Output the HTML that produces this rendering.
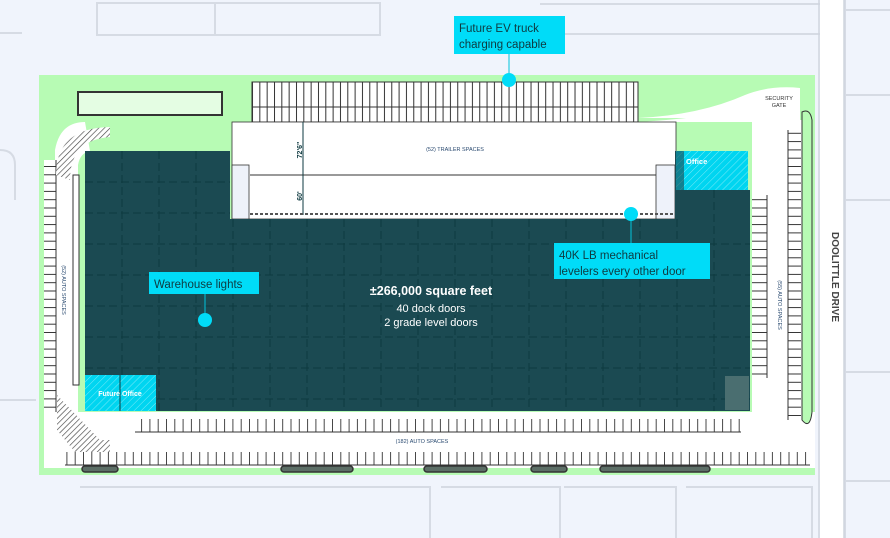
<!DOCTYPE html>
<html><head><meta charset="utf-8"><style>
html,body{margin:0;padding:0;background:#f0f4fc;}
svg{display:block}
text{font-family:"Liberation Sans",sans-serif}
</style></head><body>
<svg width="890" height="538" viewBox="0 0 890 538" xmlns="http://www.w3.org/2000/svg">
<defs>
<pattern id="trl" x="252" y="0" width="7.33" height="10" patternUnits="userSpaceOnUse"><rect width="7.33" height="10" fill="#fff"/><line x1="0.5" y1="0" x2="0.5" y2="10" stroke="#333" stroke-width="1"/></pattern>
<pattern id="stallH" x="0" y="0" width="8.3" height="20" patternUnits="userSpaceOnUse"><line x1="0.5" y1="0" x2="0.5" y2="20" stroke="#333" stroke-width="0.9"/></pattern>
<pattern id="stallV" x="0" y="0" width="20" height="8.3" patternUnits="userSpaceOnUse"><line x1="0" y1="0.5" x2="20" y2="0.5" stroke="#333" stroke-width="0.9"/></pattern>
<pattern id="gridV" x="85" y="0" width="36.8" height="10" patternUnits="userSpaceOnUse"><line x1="0.5" y1="0" x2="0.5" y2="6" stroke="#0e3a40" stroke-width="1"/></pattern>
<pattern id="hatch" width="5" height="5" patternUnits="userSpaceOnUse" patternTransform="rotate(45)"><rect width="5" height="5" fill="#00d5f0"/><line x1="0" y1="0" x2="0" y2="5" stroke="#7be9f8" stroke-width="1"/></pattern>
<pattern id="ghatch" width="4" height="4" patternUnits="userSpaceOnUse" patternTransform="rotate(45)"><rect width="4" height="4" fill="#fff"/><line x1="0" y1="0" x2="0" y2="4" stroke="#444" stroke-width="1.3"/></pattern>
</defs>

<!-- surrounding light outlines -->
<g fill="none" stroke="#d6dbe4" stroke-width="2">
<path d="M0,33 H22"/><path d="M0,150 Q15,150 15,165 V200"/>
<path d="M0,400 H36"/><path d="M80,487 H430 V538"/><path d="M441,487 H560 V538"/><path d="M564,487 H676 V538"/><path d="M686,487 H812 V538"/>
<path d="M97,3 H380 V35 H97 Z"/><path d="M215,3 V35"/><path d="M540,4 H826"/><path d="M540,34 H826"/>
<path d="M845,0 V538"/><path d="M822,0 V538"/><path d="M845,95 H890"/><path d="M845,200 H890"/><path d="M845,372 H890"/><path d="M845,481 H890"/><path d="M845,10 H890"/>
</g>

<!-- site green -->
<rect x="39" y="75" width="776" height="400" fill="#b7fbb4"/>
<!-- road strip Doolittle -->
<rect x="820" y="0" width="24" height="538" fill="#fff"/>
<line x1="819" y1="0" x2="819" y2="538" stroke="#cfd5de" stroke-width="1.5"/>
<line x1="844" y1="0" x2="844" y2="538" stroke="#cfd5de" stroke-width="1.5"/>

<!-- paved areas -->
<path d="M85,122 H640 Q700,118 740,110 Q760,110 765,130 V195 H760 V122 Z" fill="#fff"/>
<path d="M638,118 Q700,115 745,95 Q770,85 800,88 V125 H770 Q760,118 745,118 Z" fill="#fff"/>
<path d="M252,82 H638 V122 H252 Z" fill="url(#trl)" stroke="#333" stroke-width="1"/>
<line x1="252" y1="107" x2="638" y2="107" stroke="#333"/>
<path d="M85,122 Q60,122 55,150 V160 H44 V455 H78 V165 Q80,153 90,151 Z" fill="#fff"/>
<rect x="44" y="160" width="12" height="290" fill="url(#stallV)"/>
<line x1="56" y1="160" x2="56" y2="455" stroke="#333"/>
<rect x="73" y="175" width="6" height="210" fill="#fff" stroke="#333" stroke-width="1"/>
<path d="M56,175 Q56,128 110,127 V137 Q70,140 70,180 Z" fill="url(#ghatch)"/>
<rect x="44" y="412" width="771" height="56" fill="#fff"/>
<rect x="135" y="419" width="606" height="13" fill="url(#stallH)"/>
<line x1="135" y1="432" x2="741" y2="432" stroke="#333"/>
<rect x="65" y="452" width="745" height="13" fill="url(#stallH)"/>
<line x1="65" y1="465" x2="810" y2="465" stroke="#333"/>
<path d="M57,395 L100,440 H110 L110,452 L75,452 L57,430 Z" fill="url(#ghatch)"/>
<rect x="752" y="120" width="50" height="300" fill="#fff"/>
<rect x="752" y="195" width="15" height="180" fill="url(#stallV)"/>
<rect x="788" y="130" width="13" height="290" fill="url(#stallV)"/>
<line x1="767" y1="195" x2="767" y2="378" stroke="#333"/>
<line x1="788" y1="130" x2="788" y2="420" stroke="#333"/>
<path d="M802,125 V420 Q810,430 812,412 V120 Q810,108 802,112 Z" fill="#b7fbb4" stroke="#333"/>

<!-- top left planter box -->
<rect x="78" y="92" width="144" height="23" fill="#e4fde3" stroke="#333" stroke-width="2"/>
<!-- dock apron -->
<rect x="232" y="122" width="444" height="97" fill="#fff" stroke="#333" stroke-width="0.8"/>
<line x1="250" y1="175" x2="660" y2="175" stroke="#333"/>
<rect x="232" y="165" width="17" height="54" fill="#eef2fa" stroke="#333" stroke-width="0.8"/>
<rect x="656" y="165" width="19" height="54" fill="#eef2fa" stroke="#333" stroke-width="0.8"/>
<line x1="303" y1="122" x2="303" y2="215" stroke="#0e3a40" stroke-width="1"/>
<text x="302" y="150" font-size="7" font-weight="bold" fill="#0e3a40" transform="rotate(-90 302 150)" text-anchor="middle">72'6"</text>
<text x="302" y="196" font-size="7" font-weight="bold" fill="#0e3a40" transform="rotate(-90 302 196)" text-anchor="middle">60'</text>
<text x="455" y="151" font-size="5.5" fill="#2a4a70" text-anchor="middle">(52) TRAILER SPACES</text>
<text x="779" y="100" font-size="5.5" fill="#333" text-anchor="middle">SECURITY</text>
<text x="779" y="107" font-size="5.5" fill="#333" text-anchor="middle">GATE</text>
<line x1="250" y1="214" x2="676" y2="214" stroke="#555" stroke-width="2" stroke-dasharray="3,2"/>

<!-- building -->
<path d="M85,151 H230 V219 H675 V151 H748 V190 H750 V411 H85 Z" fill="#1b4a52"/>
<g stroke="#0e3a40" stroke-width="1" stroke-dasharray="8,4" fill="none">
<path d="M85,182 H230 M85,213 H230 M85,244 H750 M85,275 H750 M85,306 H750 M85,337 H750 M85,368 H750 M85,399 H750"/>
<path d="M122,151 V411 M159,151 V411 M196,151 V411 M233,219 V411 M270,219 V411 M307,219 V411 M344,219 V411 M381,219 V411 M418,219 V411 M455,219 V411 M492,219 V411 M529,219 V411 M566,219 V411 M603,219 V411 M640,219 V411 M677,219 V411 M714,190 V411"/>
</g>
<rect x="676" y="151" width="72" height="39" fill="url(#hatch)"/>
<rect x="676" y="151" width="8" height="39" fill="#1b4a52" opacity="0.6"/>
<text x="686" y="164" font-size="7.5" font-weight="bold" fill="#fff">Office</text>
<rect x="85" y="375" width="71" height="36" fill="url(#hatch)"/>
<line x1="120" y1="375" x2="120" y2="411" stroke="#0e3a40"/>
<text x="120" y="396" font-size="7" font-weight="bold" fill="#fff" text-anchor="middle">Future Office</text>
<rect x="725" y="376" width="24" height="34" fill="#4a6e70"/>

<text x="431" y="295" font-size="12.5" font-weight="bold" fill="#fff" text-anchor="middle">±266,000 square feet</text>
<text x="431" y="312" font-size="11" fill="#fff" text-anchor="middle">40 dock doors</text>
<text x="431" y="326" font-size="11" fill="#fff" text-anchor="middle">2 grade level doors</text>

<!-- bottom planters -->
<g fill="#5c6e66" stroke="#333" stroke-width="1.5">
<rect x="82" y="466" width="36" height="6" rx="3"/><rect x="281" y="466" width="72" height="6" rx="3"/><rect x="424" y="466" width="63" height="6" rx="3"/><rect x="531" y="466" width="36" height="6" rx="3"/><rect x="600" y="466" width="110" height="6" rx="3"/>
</g>
<text x="422" y="443" font-size="5.5" fill="#2a4a70" text-anchor="middle">(182) AUTO SPACES</text>
<text x="62" y="290" font-size="5.5" fill="#2a4a70" text-anchor="middle" transform="rotate(90 62 290)">(52) AUTO SPACES</text>
<text x="778" y="305" font-size="5.5" fill="#2a4a70" text-anchor="middle" transform="rotate(90 778 305)">(55) AUTO SPACES</text>
<text x="832" y="277" font-size="10" font-weight="bold" fill="#444" text-anchor="middle" transform="rotate(90 832 277)">DOOLITTLE DRIVE</text>

<!-- callouts -->
<g fill="#00dcf8">
<rect x="454" y="16" width="111" height="38"/><line x1="509" y1="54" x2="509" y2="80" stroke="#00c4dc"/><circle cx="509" cy="80" r="7"/>
<rect x="554" y="243" width="156" height="36"/><line x1="631" y1="214" x2="631" y2="243" stroke="#00c4dc"/><circle cx="631" cy="214" r="7"/>
<rect x="149" y="272" width="110" height="22"/><line x1="205" y1="294" x2="205" y2="320" stroke="#00c4dc"/><circle cx="205" cy="320" r="7"/>
</g>
<g font-size="11.5" fill="#0e3a40">
<text x="459" y="32">Future EV truck</text><text x="459" y="48">charging capable</text>
<text x="559" y="259">40K LB mechanical</text><text x="559" y="275">levelers every other door</text>
<text x="154" y="288">Warehouse lights</text>
</g>
</svg>
</body></html>
